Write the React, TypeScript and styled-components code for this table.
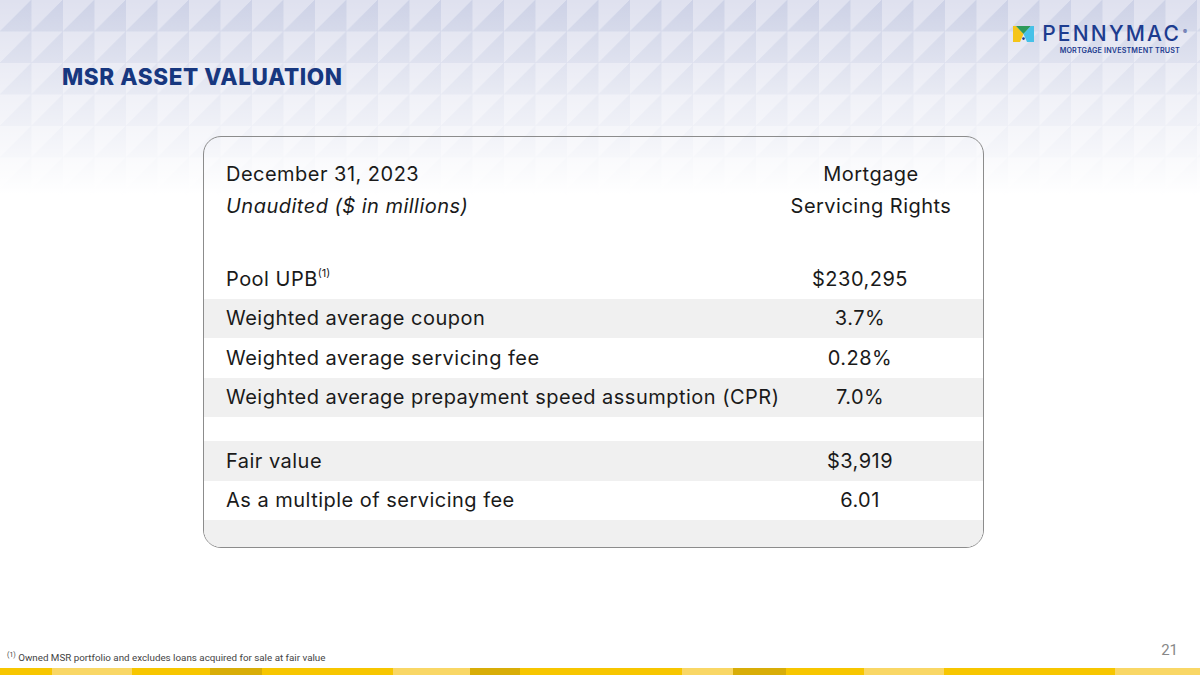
import React from 'react';
import styled, { createGlobalStyle } from 'styled-components';

const GlobalStyle = createGlobalStyle`
    html, body {
        margin: 0;
        padding: 0;
    }
    body {
        font-family: Inter, "Liberation Sans", sans-serif;
        color: #1a1a1a;
    }
`;

type Row = { label: string; value: string; shade?: boolean; note?: string; spacer?: boolean };

const rows: Row[] = [
    { label: 'Pool UPB', value: '$230,295', note: '(1)' },
    { label: 'Weighted average coupon', value: '3.7%', shade: true },
    { label: 'Weighted average servicing fee', value: '0.28%' },
    { label: 'Weighted average prepayment speed assumption (CPR)', value: '7.0%', shade: true },
    { label: '', value: '', spacer: true },
    { label: 'Fair value', value: '$3,919', shade: true },
    { label: 'As a multiple of servicing fee', value: '6.01' },
];

const stripe = [
    { w: 52, c: '#f7c600' },
    { w: 80, c: '#f9d766' },
    { w: 78, c: '#f7c600' },
    { w: 52, c: '#d8ad08' },
    { w: 131, c: '#f7c600' },
    { w: 77, c: '#f9d766' },
    { w: 50, c: '#d8ad08' },
    { w: 80, c: '#f7c600' },
    { w: 82, c: '#f7c600' },
    { w: 51, c: '#f9d766' },
    { w: 53, c: '#d8ad08' },
    { w: 78, c: '#f7c600' },
    { w: 80, c: '#f9d766' },
    { w: 104, c: '#f7c600' },
    { w: 67, c: '#f7c600' },
    { w: 85, c: '#f9d766' },
];

const LogoMark = () => (
    <svg width="21" height="16" viewBox="0 0 21 16">
        <polygon points="0,0 3,0 10.5,8 7,16 0,16" fill="#f5c518" />
        <polygon points="3,0 18,0 10.5,8" fill="#2e9a5a" />
        <polygon points="18,0 21,0 21,16 14,16 10.5,8" fill="#46c1e8" />
        <circle cx="10.5" cy="12.6" r="1.3" fill="#1b3a8c" />
    </svg>
);

export default function App() {
    return (
        <>
            <GlobalStyle />
            <Slide>
                <Header>
                    <Title>MSR ASSET VALUATION</Title>
                    <Logo>
                        <LogoTop>
                            <LogoMark />
                            <Brand>
                                PENNYMAC<Reg>®</Reg>
                            </Brand>
                        </LogoTop>
                        <Tagline>MORTGAGE INVESTMENT TRUST</Tagline>
                    </Logo>
                </Header>
                <Main>
                    <Card>
                        <CardHead>
                            <HeadLabel>
                                <span>December 31, 2023</span>
                                <em>Unaudited ($ in millions)</em>
                            </HeadLabel>
                            <HeadValue>
                                <span>Mortgage</span>
                                <span>Servicing Rights</span>
                            </HeadValue>
                        </CardHead>
                        {rows.map((r, i) =>
                            r.spacer ? (
                                <Spacer key={i} />
                            ) : (
                                <DataRow key={i} $shade={r.shade}>
                                    <Label>
                                        {r.label}
                                        {r.note && <Sup>{r.note}</Sup>}
                                    </Label>
                                    <Value>{r.value}</Value>
                                </DataRow>
                            ),
                        )}
                        <Tail />
                    </Card>
                </Main>
                <Footer>
                    <Footnote>
                        <sup>(1)</sup> Owned MSR portfolio and excludes loans acquired for sale at fair value
                    </Footnote>
                    <PageNo>21</PageNo>
                </Footer>
                <Stripe>
                    {stripe.map((s, i) => (
                        <StripeSeg key={i} $w={s.w} $c={s.c} />
                    ))}
                </Stripe>
            </Slide>
        </>
    );
}

const Slide = styled.div`
    width: 1200px;
    height: 675px;
    display: flex;
    flex-direction: column;
    overflow: hidden;
    background:
        linear-gradient(to bottom, rgba(255, 255, 255, 0) 0px, rgba(255, 255, 255, 0.55) 95px, #fff 195px, #fff 100%),
        linear-gradient(to bottom right, rgba(255, 255, 255, 0.28) 50%, rgba(170, 178, 210, 0.12) 50%) 0 0 / 31.5px 31.5px,
        #d2d6e9;
`;
const Header = styled.div`
    display: flex;
    justify-content: space-between;
    align-items: flex-start;
    padding: 22px 18px 0 62px;
    height: 114px;
    box-sizing: border-box;
`;
const Title = styled.h1`
    margin: 41px 0 0;
    font-size: 22.5px;
    font-weight: 800;
    color: #17377f;
    letter-spacing: 0.6px;
`;
const Logo = styled.div`
    display: flex;
    flex-direction: column;
    align-items: flex-end;
`;
const LogoTop = styled.div`
    display: flex;
    align-items: center;
    gap: 8px;
    margin-top: 2px;
    padding-right: 1px;
`;
const Brand = styled.span`
    font-size: 21px;
    font-weight: 500;
    color: #1d3c8f;
    letter-spacing: 2.2px;
    line-height: 20px;
    position: relative;
`;
const Reg = styled.span`
    position: absolute;
    top: -2px;
    right: -6px;
    font-size: 6px;
    letter-spacing: 0;
`;
const Tagline = styled.span`
    margin-top: 2px;
    font-size: 7.2px;
    font-weight: 600;
    color: #1d3c8f;
    letter-spacing: 0.15px;
    line-height: 9px;
    padding-right: 2px;
`;
const Main = styled.div`
    flex: 1;
    padding: 22px 0 0 203px;
`;
const Card = styled.div`
    width: 781px;
    height: 412px;
    box-sizing: border-box;
    border: 1px solid #8c8c8c;
    border-radius: 18px;
    overflow: hidden;
    display: flex;
    flex-direction: column;
    font-size: 20px;
    letter-spacing: 0.48px;
`;
const CardHead = styled.div`
    display: grid;
    grid-template-columns: 564px 162px;
    padding: 21px 0 0 22px;
    height: 122px;
    box-sizing: border-box;
    line-height: 32px;
`;
const HeadLabel = styled.div`
    display: flex;
    flex-direction: column;
    em {
        font-style: italic;
    }
`;
const HeadValue = styled.div`
    display: flex;
    flex-direction: column;
    align-items: center;
    white-space: nowrap;
`;
const DataRow = styled.div<{ $shade?: boolean }>`
    display: grid;
    grid-template-columns: 564px 140px;
    align-items: center;
    padding-left: 22px;
    height: 39.5px;
    background: ${(p) => (p.$shade ? '#f0f0f0' : 'transparent')};
`;
const Label = styled.span`
    white-space: nowrap;
`;
const Sup = styled.sup`
    font-size: 11px;
    vertical-align: 9px;
    line-height: 0;
    letter-spacing: 0;
`;
const Value = styled.span`
    text-align: center;
`;
const Spacer = styled.div`
    height: 24px;
`;
const Tail = styled.div`
    flex: 1;
    background: #f0f0f0;
`;
const Footer = styled.div`
    display: flex;
    justify-content: space-between;
    align-items: flex-end;
    padding: 0 22px 4px 7px;
    font-family: Roboto, 'Liberation Sans', sans-serif;
`;
const PageNo = styled.span`
    font-size: 15px;
    color: #888;
    line-height: 16px;
    margin-bottom: 6px;
`;
const Footnote = styled.span`
    font-size: 9.8px;
    color: #444;
    line-height: 13px;
    sup {
        font-size: 7px;
        vertical-align: 4px;
        line-height: 0;
    }
`;
const Stripe = styled.div`
    display: flex;
    height: 7px;
    flex-shrink: 0;
`;
const StripeSeg = styled.div<{ $w: number; $c: string }>`
    flex: ${(p) => p.$w} 0 0;
    background: ${(p) => p.$c};
`;
